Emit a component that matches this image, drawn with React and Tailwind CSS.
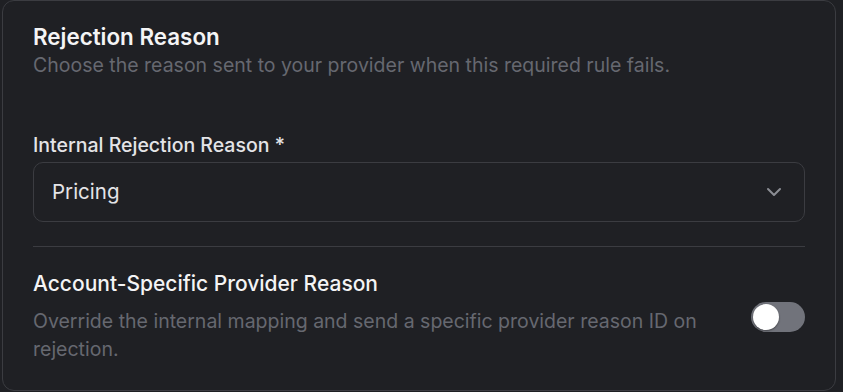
import React from "react";
import { ChevronDown } from "lucide-react";

export default function App() {
  return (
    <div className="w-[843px] h-[392px] bg-[#1f2024] overflow-hidden" style={{ fontFamily: "Inter, 'Noto Sans', sans-serif" }}>
      <div className="ml-[2px] w-[834px] h-[391px] rounded-[12px] border border-[#3b3c41] bg-[#1f2024] px-[30px] pt-[22px] pb-[26px] flex flex-col">
        <h2 className="text-[22.4px] leading-[28px] font-semibold text-[#f4f4f5]">Rejection Reason</h2>
        <p className="text-[19.5px] leading-[28px] text-[#666870]">
          Choose the reason sent to your provider when this required rule fails.
        </p>

        <label className="mt-[52px] text-[19.5px] leading-[28px] font-medium text-[#e4e4e7]">
          Internal Rejection Reason *
        </label>
        <div className="mt-[3px] h-[60px] rounded-[10px] border border-[#3b3c41] flex items-center justify-between pl-[18px] pr-[18px]">
          <span className="text-[20.5px] text-[#e4e4e7]">Pricing</span>
          <ChevronDown size={24} strokeWidth={2} className="text-[#8b8d94]" />
        </div>

        <div className="mt-[24px] h-px bg-[#3b3c41]" />

        <div className="mt-[23px] flex items-center gap-12">
          <div className="flex-1">
            <h3 className="text-[21px] leading-[28px] font-medium text-[#f4f4f5]">Account-Specific Provider Reason</h3>
            <p className="mt-[9px] text-[19.5px] leading-[28px] text-[#666870]">
              Override the internal mapping and send a specific provider reason ID on rejection.
            </p>
          </div>
          <div className="w-[54px] h-[30px] rounded-full bg-[#71737b] flex items-center p-[2px] shrink-0">
            <div className="w-[26px] h-[26px] rounded-full bg-white shadow-[0_1px_2px_rgba(0,0,0,0.4)]" />
          </div>
        </div>
      </div>
    </div>
  );
}
